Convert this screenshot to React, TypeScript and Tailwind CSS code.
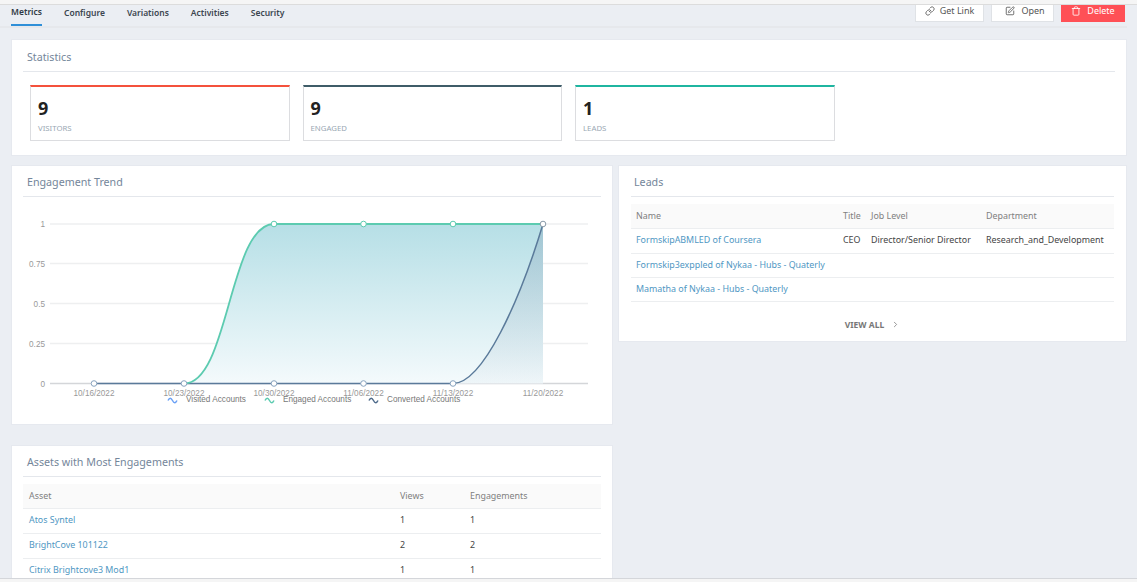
import { ChevronRight, Link, SquarePen, Trash } from "lucide-react";

const tabs = ["Configure", "Variations", "Activities", "Security"];

const stats = [
  { value: "9", label: "VISITORS", border: "border-t-[#f4513c]" },
  { value: "9", label: "ENGAGED", border: "border-t-[#3f5c68]" },
  { value: "1", label: "LEADS", border: "border-t-[#1fb5a0]" },
];

const leads = [
  { name: "FormskipABMLED of Coursera", title: "CEO", level: "Director/Senior Director", dept: "Research_and_Development", height: "h-[25px]" },
  { name: "Formskip3exppled of Nykaa - Hubs - Quaterly", title: "", level: "", dept: "", height: "h-[24px]" },
  { name: "Mamatha of Nykaa - Hubs - Quaterly", title: "", level: "", dept: "", height: "h-[24px]" },
];

const assets = [
  { name: "Atos Syntel", views: 1, engagements: 1 },
  { name: "BrightCove 101122", views: 2, engagements: 2 },
  { name: "Citrix Brightcove3 Mod1", views: 1, engagements: 1 },
];

const Card = ({
  title,
  className,
  titlePad = "pl-[4px]",
  children,
}: {
  title: string;
  className: string;
  titlePad?: string;
  children: React.ReactNode;
}) => (
  <div className={`bg-white border border-[#e6e9ef] ${className}`}>
    <h3 className={`h-[31px] pt-[8px] ${titlePad} text-[10.7px] leading-[16px] text-[#74869a] border-b border-[#e4e7ec]`}>{title}</h3>
    {children}
  </div>
);

const Wave = ({ x, color }: { x: number; color: string }) => (
  <path d={`M${x} 234.5 q2.2 -4.5 4.5 0 t4.5 0`} fill="none" stroke={color} strokeWidth="1.5" />
);

const Chart = () => {
  const xs = [82, 172, 262, 351.5, 441, 531];
  const dates = ["10/16/2022", "10/23/2022", "10/30/2022", "11/06/2022", "11/13/2022", "11/20/2022"];
  const grid = [
    { y: 58, label: "1" },
    { y: 97.5, label: "0.75" },
    { y: 137.5, label: "0.5" },
    { y: 177.5, label: "0.25" },
    { y: 217.5, label: "0" },
  ];
  const engaged = "M172 217.5 C217 217.5 217 58 262 58 L531 58";
  const converted = "M441 217.5 C471 217.5 508 134 531 58";
  return (
    <svg width="600" height="258" className="block" fontFamily="'Liberation Sans', sans-serif" fontSize="8.2">
      <defs>
        <linearGradient id="tealFill" x1="0" y1="0" x2="0" y2="1">
          <stop offset="0" stopColor="#b6dfe6" />
          <stop offset="1" stopColor="#f4fafc" />
        </linearGradient>
        <linearGradient id="blueFill" x1="0" y1="0" x2="0" y2="1">
          <stop offset="0" stopColor="#6d8aa6" stopOpacity="0.3" />
          <stop offset="1" stopColor="#6d8aa6" stopOpacity="0.04" />
        </linearGradient>
      </defs>
      {grid.map((g) => (
        <g key={g.y}>
          <line x1="38" x2="576" y1={g.y} y2={g.y} stroke={g.y === 217.5 ? "#d4d6d9" : "#eeeff0"} strokeWidth="1.6" />
          <text x="33" y={g.y + 3} textAnchor="end" fill="#999">{g.label}</text>
        </g>
      ))}
      <path d={`${engaged} L531 217.5 Z`} fill="url(#tealFill)" />
      <path d={`${converted} L531 217.5 Z`} fill="url(#blueFill)" />
      <line x1="82" x2="441" y1="217.5" y2="217.5" stroke="#5a7a9a" strokeWidth="1.5" />
      <path d={engaged} fill="none" stroke="#5ccbb0" strokeWidth="1.8" />
      <path d={converted} fill="none" stroke="#5a7a9a" strokeWidth="1.5" />
      {xs.map((x, i) => (
        <g key={x}>
          {i < 5 && <circle cx={x} cy="217.5" r="2.8" fill="#fff" stroke="#8aa5c0" />}
          {i >= 2 && <circle cx={x} cy="58" r="2.8" fill="#fff" stroke={i === 5 ? "#8a9aa8" : "#5ccbb0"} />}
          <text x={x} y="229.5" textAnchor="middle" fill="#999">{dates[i]}</text>
        </g>
      ))}
      <Wave x={156} color="#6aa0f5" />
      <text x="174" y="236" fill="#777">Visited Accounts</text>
      <Wave x={253} color="#5ccbb0" />
      <text x="271" y="236" fill="#777">Engaged Accounts</text>
      <Wave x={357} color="#4d6a8a" />
      <text x="375" y="236" fill="#777">Converted Accounts</text>
    </svg>
  );
};

export default function App() {
  return (
    <div className="h-[582px] overflow-hidden bg-[#ebeef3] font-['Noto_Sans',sans-serif] relative">
      <div className="h-[5px] bg-[#f5f5f5] border-b border-[#dcdcdc]" />

      {/* tabs */}
      <div className="h-[23px] mr-[10px] flex justify-between border-b-2 border-[#e6e8ec] pl-[11px] pr-[2px]">
        <div className="flex items-start text-[8.5px] font-semibold text-[#3c4650]">
          <div className="w-[31px] h-[21px] pt-[1px] text-center leading-[12px] text-[#2f3a44] border-b-2 border-[#2f8fd8]">Metrics</div>
          {tabs.map((t) => (
            <div key={t} className="ml-[22px] pt-[2px] leading-[12px]">{t}</div>
          ))}
        </div>
        <div className="flex text-[9px] h-[17px]">
          <button className="w-[69px] pb-[5px] flex items-center justify-center gap-[5px] bg-white border border-[#dfe2e6] border-t-0 text-[#555]">
            <Link size={10} /> Get Link
          </button>
          <button className="w-[63px] ml-[7px] pb-[5px] pl-[5px] flex items-center justify-center gap-[6px] bg-white border border-[#dfe2e6] border-t-0 text-[#555]">
            <SquarePen size={10} /> Open
          </button>
          <button className="w-[64px] ml-[7px] pb-[5px] flex items-center justify-center gap-[6px] bg-[#ff5056] text-white">
            <Trash size={10} /> Delete
          </button>
        </div>
      </div>

      <div className="pl-[11px] pr-[10px] pt-[11px]">
        <Card title="Statistics" className="h-[117px] pt-[1px] px-[11px]">
          <div className="flex gap-[13px] pt-[13px] pl-[7px]">
            {stats.map((s) => (
              <div key={s.label} className={`w-[259.5px] h-[56px] border border-[#dcdde0] border-t-2 px-[7px] ${s.border}`}>
                <div className="pt-[9px] text-[18px] leading-[24px] font-bold text-[#222]">{s.value}</div>
                <div className="text-[7.8px] leading-[10px] mt-[3px] text-[#9aa8b4]">{s.label}</div>
              </div>
            ))}
          </div>
        </Card>

        <div className="grid grid-cols-[602px_509px] gap-x-[5px] mt-[9px]">
          <div>
            <Card title="Engagement Trend" className="h-[260px] px-[11px] relative overflow-hidden">
              <div className="absolute left-0 top-0">
                <Chart />
              </div>
            </Card>
            <Card title="Assets with Most Engagements" className="mt-[20px] h-[200px] px-[11px]">
              <table className="w-full table-fixed mt-[7px] text-[8.9px] text-[#444]">
                <thead>
                  <tr className="h-[24px] bg-[#fafafa] text-[#808080] text-left border-b border-[#eceef0]">
                    <th className="font-normal pl-[6px] w-[377px]">Asset</th>
                    <th className="font-normal w-[70px]">Views</th>
                    <th className="font-normal">Engagements</th>
                  </tr>
                </thead>
                <tbody>
                  {assets.map((a) => (
                    <tr key={a.name} className="h-[25px] border-b border-[#eceef0]">
                      <td className="pl-[6px] pb-[2px] text-[#4f97c3]">{a.name}</td>
                      <td className="pb-[2px]">{a.views}</td>
                      <td className="pb-[2px]">{a.engagements}</td>
                    </tr>
                  ))}
                </tbody>
              </table>
            </Card>
          </div>

          <Card title="Leads" titlePad="pl-[3px]" className="h-[177px] px-[12px]">
            <table className="w-full table-fixed mt-[7px] text-[8.9px] text-[#444]">
              <thead>
                <tr className="h-[24px] bg-[#fafafa] text-[#808080] text-left border-b border-[#eceef0]">
                  <th className="font-normal pl-[5px] w-[212px]">Name</th>
                  <th className="font-normal w-[28px]">Title</th>
                  <th className="font-normal w-[115px]">Job Level</th>
                  <th className="font-normal">Department</th>
                </tr>
              </thead>
              <tbody>
                {leads.map((l) => (
                  <tr key={l.name} className={`${l.height} border-b border-[#eceef0]`}>
                    <td className="pl-[5px] pb-[1px] text-[#4f97c3] whitespace-nowrap">{l.name}</td>
                    <td className="pb-[1px]">{l.title}</td>
                    <td className="pb-[1px] whitespace-nowrap">{l.level}</td>
                    <td className="pb-[1px] whitespace-nowrap">{l.dept}</td>
                  </tr>
                ))}
              </tbody>
            </table>
            <div className="flex justify-center items-center gap-[7px] mt-[17px] text-[8.5px] font-bold text-[#777]">
              VIEW ALL <ChevronRight size={9} />
            </div>
          </Card>
        </div>
      </div>

      {/* bottom edge of the scroll area */}
      <div className="absolute bottom-0 left-0 right-0 h-[4px] bg-[#f5f5f5] border-t border-[#d4d6da]" />
    </div>
  );
}
